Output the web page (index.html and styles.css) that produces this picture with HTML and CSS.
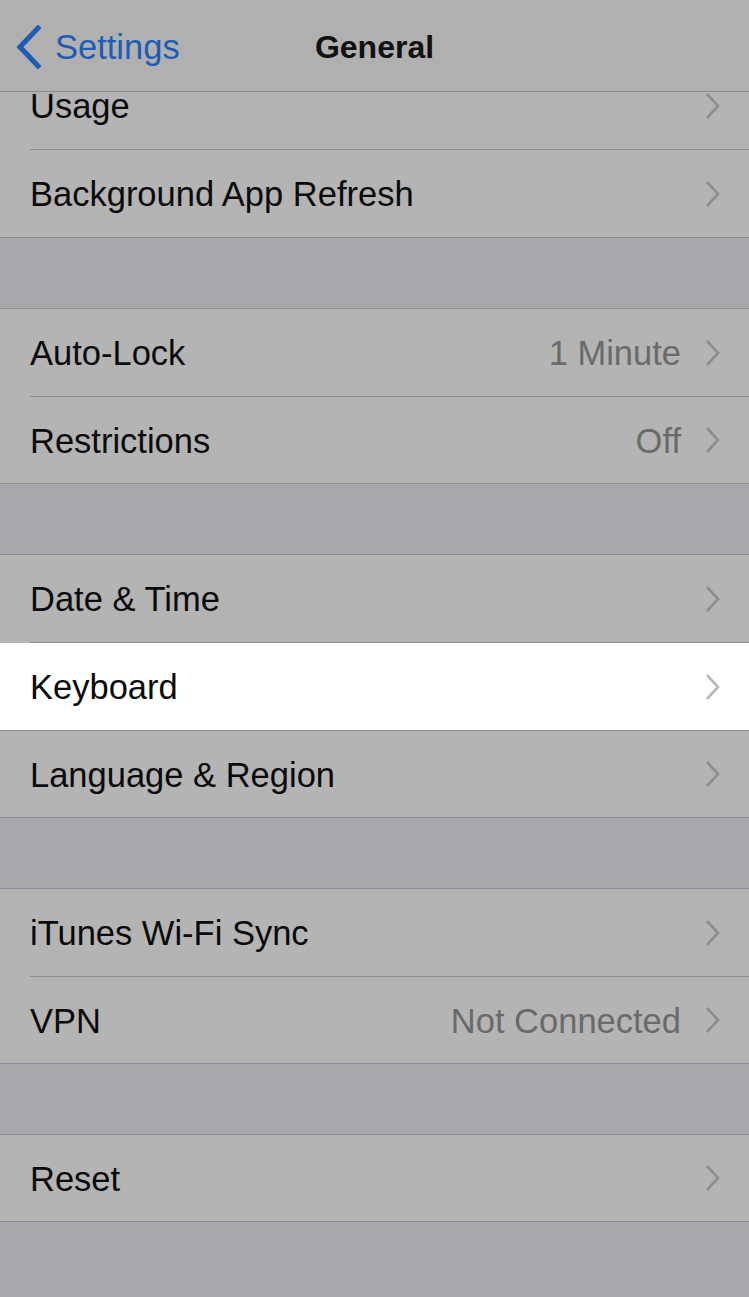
FILE: index.html
```html
<!DOCTYPE html>
<html>
<head>
    <title>General</title>
    <link rel="stylesheet" href="styles.css">
</head>
<body>
    <div class="nav_bar">
        <div class="nav_back">
            <svg class="back_icon" width="28" height="44" viewBox="0 0 28 44">
                <path d="M23 3 L5 22 L23 41" fill="none" stroke="#1f5cb6" stroke-width="5" stroke-linecap="square" stroke-linejoin="miter"/>
            </svg>
            <span>Settings</span>
        </div>
        <div class="nav_title">General</div>
    </div>

    <div class="settings_list">
        <div class="group">
            <div class="cell"><span class="label">Usage</span><svg class="chevron" viewBox="0 0 16 28"><path d="M2 2 L13 14 L2 26"/></svg></div>
            <div class="cell"><span class="label">Background App Refresh</span><svg class="chevron" viewBox="0 0 16 28"><path d="M2 2 L13 14 L2 26"/></svg></div>
        </div>

        <div class="group">
            <div class="cell"><span class="label">Auto-Lock</span><span class="value">1 Minute</span><svg class="chevron" viewBox="0 0 16 28"><path d="M2 2 L13 14 L2 26"/></svg></div>
            <div class="cell"><span class="label">Restrictions</span><span class="value">Off</span><svg class="chevron" viewBox="0 0 16 28"><path d="M2 2 L13 14 L2 26"/></svg></div>
        </div>

        <div class="group">
            <div class="cell"><span class="label">Date &amp; Time</span><svg class="chevron" viewBox="0 0 16 28"><path d="M2 2 L13 14 L2 26"/></svg></div>
            <div class="cell highlighted"><span class="label">Keyboard</span><svg class="chevron" viewBox="0 0 16 28"><path d="M2 2 L13 14 L2 26"/></svg></div>
            <div class="cell"><span class="label">Language &amp; Region</span><svg class="chevron" viewBox="0 0 16 28"><path d="M2 2 L13 14 L2 26"/></svg></div>
        </div>

        <div class="group">
            <div class="cell"><span class="label">iTunes Wi-Fi Sync</span><svg class="chevron" viewBox="0 0 16 28"><path d="M2 2 L13 14 L2 26"/></svg></div>
            <div class="cell"><span class="label">VPN</span><span class="value">Not Connected</span><svg class="chevron" viewBox="0 0 16 28"><path d="M2 2 L13 14 L2 26"/></svg></div>
        </div>

        <div class="group">
            <div class="cell"><span class="label">Reset</span><svg class="chevron" viewBox="0 0 16 28"><path d="M2 2 L13 14 L2 26"/></svg></div>
        </div>
    </div>
</body>
</html>
```

FILE: styles.css
```css
body{
    margin: 0;
    background-color: #a8a7ac;
    font-family: "Liberation Sans", Arial, sans-serif;
    height: 1297px;
    overflow: hidden;
}

/* top bar sits over the scrolled list */
.nav_bar{
    position: absolute;
    top: 0;
    left: 0;
    right: 0;
    height: 91px;
    background-color: #b0b0b0;
    border-bottom: 1px solid #8c8c8c;
    display: flex;
    align-items: center;
    justify-content: center;
    z-index: 2;
}
.nav_back{
    position: absolute;
    left: 15px;
    top: 25px;
    display: flex;
    align-items: center;
    gap: 12px;
    color: #1f5cb6;
    font-size: 34.5px;
}
.nav_title{
    font-size: 32px;
    font-weight: bold;
    color: #111;
    margin-top: 4px;
}

.settings_list{
    padding-top: 62px;
    display: flex;
    flex-direction: column;
    gap: 70px;
}
.group{
    background-color: #b4b4b4;
    border-top: 1px solid #8e8e8e;
    border-bottom: 1px solid #8e8e8e;
}
.settings_list .group:first-child{
    border-top: none;
}
.settings_list .group:first-child .cell:last-child{
    height: 87px;
}
.cell{
    box-sizing: border-box;
    height: 88px;
    margin-left: 30px;
    padding-right: 28px;
    padding-top: 2px;
    display: flex;
    align-items: center;
    border-bottom: 1px solid #8e8e8e;
    font-size: 34.5px;
    color: #0a0a0a;
}
.cell:last-child{
    border-bottom: none;
    height: 86px;
}
.highlighted{
    background-color: #fff;
    margin-left: 0;
    padding-left: 30px;
}
.label{
    flex: 1;
}
.value{
    color: #6a6a6a;
    margin-right: 24px;
}
.chevron{
    width: 16px;
    height: 28px;
    fill: none;
    stroke: #8d8d8d;
    stroke-width: 2.6;
    margin-top: -2px;
}
.highlighted .chevron{
    stroke: #b8b8b8;
}
```
